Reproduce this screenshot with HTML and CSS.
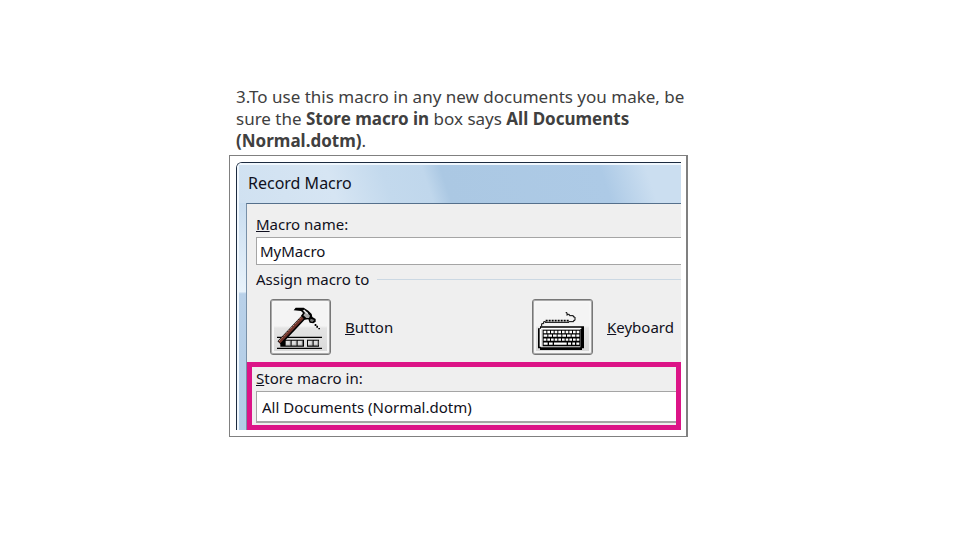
FILE: index.html
```html
<!DOCTYPE html>
<html lang="en">
<head>
<meta charset="utf-8">
<meta name="viewport" content="width=device-width, initial-scale=1">
<title>Record Macro</title>
<link rel="stylesheet" href="styles.css">
</head>
<body>
<main class="page">
  <section class="step">
    <p class="instruction">3.To use this macro in any new documents you make, be sure the <strong>Store macro in</strong> box says <strong>All Documents (Normal.dotm)</strong>.</p>
    <div class="frame">
      <form class="dialog">
        <h1 class="titlebar">Record Macro</h1>
        <div class="body">
          <div class="content">
            <div class="field">
              <label for="name"><u>M</u>acro name:</label>
              <input id="name" type="text" value="MyMacro">
            </div>
            <div class="group-title"><span>Assign macro to</span></div>
            <div class="targets">
              <div class="target">
                <button type="button" id="assign-button" class="tile">
                  <svg viewBox="21 18 171 156" aria-hidden="true">
                    <path d="M36 127H171M36 160H171" stroke="#000" stroke-width="4"/>
                    <path d="M46 134H117V155H46ZM126 134H162V155H126Z" fill="#000"/>
                    <path d="M62 137H76V151H62ZM80 137H94V151H80ZM98 137H112V151H98ZM129 137H142V151H129ZM146 137H159V151H146Z" fill="#ddd"/>
                    <path d="M76 137V151H62M94 137V151H80M112 137V151H98M142 137V151H129M159 137V151H146" stroke="#777" stroke-width="3" fill="none"/>
                    <path d="M43 144L120 62" stroke="#000" stroke-width="15"/>
                    <path d="M43 142L118 63" stroke="#70342b" stroke-width="8"/>
                    <path d="M42 138L112 63" stroke="#c58a79" stroke-width="3" stroke-dasharray="7 3"/>
                    <path d="M86 46L92 38H116L130 47L140 57L142 66L152 72V80L145 85L134 83L130 73L119 74L108 62L114 54L108 48Z" fill="#000"/>
                    <path d="M112 44L126 52L135 62L132 69H124L115 61L120 54Z" fill="#aaa"/>
                    <path d="M116 45L128 56" stroke="#eee" stroke-width="4"/>
                    <path d="M137 71L148 75L142 81L135 78Z" fill="#777"/>
                    <path d="M149 87H154V92H159V98H154V93H149ZM160 99H165V103H160Z" fill="#000"/>
                  </svg>
                </button>
                <label for="assign-button"><u>B</u>utton</label>
              </div>
              <div class="target">
                <button type="button" id="assign-keyboard" class="tile">
                  <svg viewBox="21 18 171 156" aria-hidden="true">
                    <path d="M44 94V86H50V80H56M125 80H140V76H144V66H139V62H127V58H120V53H116M120 58V62" fill="none" stroke="#000" stroke-width="3"/>
                    <path d="M56 77H126" stroke="#000" stroke-width="5" stroke-dasharray="6 3"/>
                    <path d="M54 82H126" stroke="#000" stroke-width="3"/>
                    <path d="M39 94H171V160H165V165H39V160H33V100H39Z" fill="#000"/>
                    <path d="M42 98H163V102H42V155H38V101H42Z" fill="#fff"/>
                    <path d="M42 102H160V157H42Z" fill="#ddd"/>
                    <path d="M47 104H159V154H47Z" fill="#000"/>
                    <path d="M50 111H157" stroke="#fff" stroke-width="7" stroke-dasharray="8 3"/>
                    <path d="M50 122H157" stroke="#fff" stroke-width="7" stroke-dasharray="11 3"/>
                    <path d="M50 134H157" stroke="#fff" stroke-width="7" stroke-dasharray="8 3"/>
                    <path d="M50 146H62M66 146H77M81 146H119M123 146H132M136 146H144M148 146H157" stroke="#fff" stroke-width="7"/>
                  </svg>
                </button>
                <label for="assign-keyboard"><u>K</u>eyboard</label>
              </div>
            </div>
            <div class="field highlight">
              <label for="store"><u>S</u>tore macro in:</label>
              <select id="store"><option>All Documents (Normal.dotm)</option></select>
            </div>
          </div>
        </div>
      </form>
    </div>
  </section>
</main>
</body>
</html>
```
FILE: styles.css
```css
* {
  box-sizing: border-box;
}

body {
  margin: 0;
  background: #fff;
  color: #404040;
  font: 17px/22px "Noto Sans", "Open Sans", sans-serif;
}

.page {
  display: grid;
  grid-template-columns: 229fr 459fr 272fr;
  padding-top: 86px;
}

.step {
  grid-column: 2;
  min-width: 0;
}

.instruction {
  margin: 0;
  padding: 0 0 3px 7px;
}

.frame {
  padding: 6px 5px 6px 6px;
  border: 1px solid #808080;
  border-right-width: 2px;
}

.dialog {
  overflow: hidden;
  border-top: 1px solid #1c2b40;
  border-left: 1px solid #1c2b40;
  border-top-left-radius: 6px;
  color: #101020;
  font-size: 15px;
  line-height: 20px;
}

.titlebar {
  margin: 0;
  padding: 10px 11px;
  background: linear-gradient(72deg, #d0e1f1 0, #d6e5f3 22%, #c3d9ed 34%, #c0d7ec 43%, #abc8e3 47%, #adcae6 82%, #cbdef0 92%);
  box-shadow: inset 2px 2px #f0f7fd;
  font-size: 16px;
  font-weight: 400;
  line-height: 20px;
}

.body {
  padding-left: 9px;
  background: linear-gradient(#c9ddf0, #e9f3fb 39%, #b9d1e9 40%, #b3cde7);
  box-shadow: inset 2px 0 #f0f7fd;
}

.content {
  border-top: 1px solid #55708c;
  border-left: 1px solid #7890a8;
  background: #efefef;
}

.field {
  display: flex;
  flex-direction: column;
  gap: 3px;
  padding: 10px 0 0 9px;
}

.field input,
.field select {
  width: 100%;
  height: 28px;
  margin: 0;
  padding: 0 3px;
  border: 1px solid #a5a5a5;
  border-right: 0;
  border-radius: 0;
  outline: 0;
  background: #fff;
  color: inherit;
  font: inherit;
  appearance: none;
}

.group-title {
  display: flex;
  align-items: center;
  gap: 8px;
  padding: 4px 0 0 9px;
}

.group-title::after {
  flex: 1;
  height: 1px;
  background: #cbd8e3;
  content: "";
}

.targets {
  display: grid;
  grid-template-columns: 262fr 149fr;
  padding: 10px 0 7px 23px;
}

.target {
  display: flex;
  align-items: center;
  gap: 14px;
}

.tile {
  flex: none;
  width: 61px;
  height: 56px;
  padding: 0;
  border: 1px solid #777;
  border-radius: 3px;
  background: linear-gradient(#f4f4f4 48%, #e4e4e4 52%, #d8d8d8);
  box-shadow: inset 0 0 0 1px #aaa, inset 0 0 0 3px #f6f6f6;
}

.tile svg {
  display: block;
  width: 57px;
  margin: 0 auto;
}

.highlight {
  padding: 1px 0 2px 4px;
  border: 5px solid #dc1487;
}

.highlight select {
  height: 32px;
  padding: 0 5px;
  border-bottom-width: 2px;
}
```
